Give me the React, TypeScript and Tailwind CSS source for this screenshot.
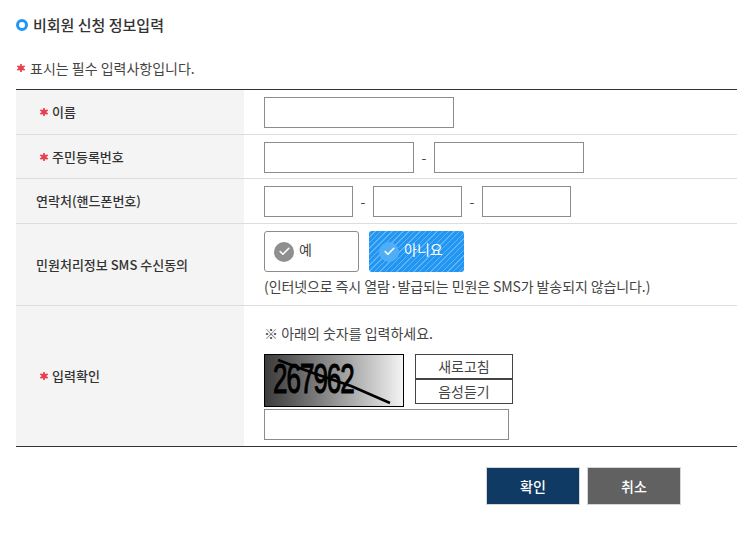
import React from 'react';
import { Check } from 'lucide-react';

const Star = () => (
  <span className="inline-block w-[8px] h-[8px] text-[#e8404f] align-middle">
    <svg viewBox="0 0 8 8" className="w-full h-full block">
      <g stroke="currentColor" strokeWidth="1.7">
        <line x1="4" y1="0" x2="4" y2="8" />
        <line x1="0.4" y1="1.9" x2="7.6" y2="6.1" />
        <line x1="0.4" y1="6.1" x2="7.6" y2="1.9" />
      </g>
      <circle cx="4" cy="4" r="2.6" fill="currentColor" />
    </svg>
  </span>
);

const Label = ({ children, required }: { children: React.ReactNode; required?: boolean }) => (
  <div className={`w-[228px] shrink-0 bg-[#f4f4f4] flex items-center font-medium text-[13px] text-[#333] ${required ? 'pl-[24px] gap-[4px]' : 'pl-[20px]'}`}>
    {required && <Star />}
    <span>{children}</span>
  </div>
);

const Input = ({ className }: { className: string }) => (
  <input className={`h-[31px] border border-[#8c8c8c] bg-white ${className}`} />
);

export default function App() {
  return (
    <div className="w-[737px] h-[533px] bg-white pl-[16px] overflow-hidden text-[#333] font-['Noto_Sans_CJK_KR','Noto_Sans',sans-serif]">
      <h2 className="flex items-center gap-[5px] h-[50px] text-[15px] font-medium text-[#333]">
        <span className="w-[12px] h-[12px] rounded-full border-[3px] border-[#2196f3] bg-white" />
        비회원 신청 정보입력
      </h2>
      <p className="flex items-center gap-[5px] pl-[1px] h-[39px] pb-[3px] text-[14px] text-[#444]">
        <Star />
        표시는 필수 입력사항입니다.
      </p>
      <div className="border-t border-b border-t-[#333] border-b-[#333]">
        <div className="flex h-[45px] border-b border-[#ddd]">
          <Label required>이름</Label>
          <div className="flex items-start pl-[20px] pt-[7px]">
            <Input className="w-[190px]" />
          </div>
        </div>
        <div className="flex h-[44px] border-b border-[#ddd]">
          <Label required>주민등록번호</Label>
          <div className="flex items-start pl-[20px] pt-[7px]">
            <Input className="w-[150px]" />
            <span className="w-[20px] text-center text-[14px] leading-[31px] text-[#444]">-</span>
            <Input className="w-[150px]" />
          </div>
        </div>
        <div className="flex h-[45px] border-b border-[#ddd]">
          <Label>연락처(핸드폰번호)</Label>
          <div className="flex items-start pl-[20px] pt-[7px]">
            <Input className="w-[89px]" />
            <span className="w-[20px] text-center text-[14px] leading-[31px] text-[#444]">-</span>
            <Input className="w-[89px]" />
            <span className="w-[20px] text-center text-[14px] leading-[31px] text-[#444]">-</span>
            <Input className="w-[89px]" />
          </div>
        </div>
        <div className="flex h-[82px] border-b border-[#ddd]">
          <Label>민원처리정보 SMS 수신동의</Label>
          <div className="pl-[20px] pt-[7px]">
            <div className="flex gap-[10px]">
              <div className="w-[95px] h-[41px] rounded-[3px] border border-[#8c8c8c] bg-white flex items-center pl-[9px] gap-[5px] text-[14px] text-[#444]">
                <span className="w-[20px] h-[20px] rounded-full bg-[#8f8f8f] flex items-center justify-center">
                  <Check className="w-[13px] h-[13px] text-white" strokeWidth={3} />
                </span>
                <span className="-mt-[4px]">예</span>
              </div>
              <div className="w-[95px] h-[41px] rounded-[3px] bg-[#2196f3] bg-[repeating-linear-gradient(135deg,rgba(255,255,255,0.28)_0,rgba(255,255,255,0.28)_1px,transparent_1px,transparent_4px)] flex items-center pl-[10px] gap-[5px] text-[14px] text-white">
                <span className="w-[20px] h-[20px] rounded-full bg-[#50aef7] flex items-center justify-center">
                  <Check className="w-[13px] h-[13px] text-white" strokeWidth={3} />
                </span>
                <span className="-mt-[4px]">아니요</span>
              </div>
            </div>
            <p className="mt-[4px] text-[14px] leading-[20px] text-[#444] tracking-[-0.1px] whitespace-nowrap">(인터넷으로 즉시 열람·발급되는 민원은 SMS가 발송되지 않습니다.)</p>
          </div>
        </div>
        <div className="flex h-[140px]">
          <Label required>입력확인</Label>
          <div className="pl-[20px] pt-[17px]">
            <p className="text-[14px] leading-[20px] text-[#444]">※ 아래의 숫자를 입력하세요.</p>
            <div className="flex mt-[11px] gap-[11px]">
              <div className="relative w-[140px] h-[53px] border border-black bg-gradient-to-r from-[#3c3c3c] to-[#f4f4f4] overflow-hidden">
                <svg viewBox="0 0 138 51" className="absolute inset-0 w-full h-full">
                  <text transform="translate(8 38) scale(1 1.62)" fontSize="26" letterSpacing="-1" fontFamily="'Liberation Sans',sans-serif" fill="#000" stroke="#000" strokeWidth="0.7">267962</text>
                  <path d="M13 5 L48 18 L86 31 L125 48" stroke="#000" strokeWidth="2.5" fill="none" />
                </svg>
              </div>
              <div className="flex flex-col w-[98px]">
                <button className="h-[25px] border border-[#444] text-[14px] text-[#444] bg-white">새로고침</button>
                <button className="h-[25px] border border-[#444] text-[14px] text-[#444] bg-white">음성듣기</button>
              </div>
            </div>
            <Input className="w-[245px] mt-[2px] block" />
          </div>
        </div>
      </div>
      <div className="flex gap-[7px] mt-[20px] pl-[470px]">
        <button className="w-[94px] h-[38px] bg-[#0e3a63] border border-[#d6d6d6] text-white text-[14px] font-medium">확인</button>
        <button className="w-[94px] h-[38px] bg-[#616161] border border-[#d6d6d6] text-white text-[14px] font-medium">취소</button>
      </div>
    </div>
  );
}
